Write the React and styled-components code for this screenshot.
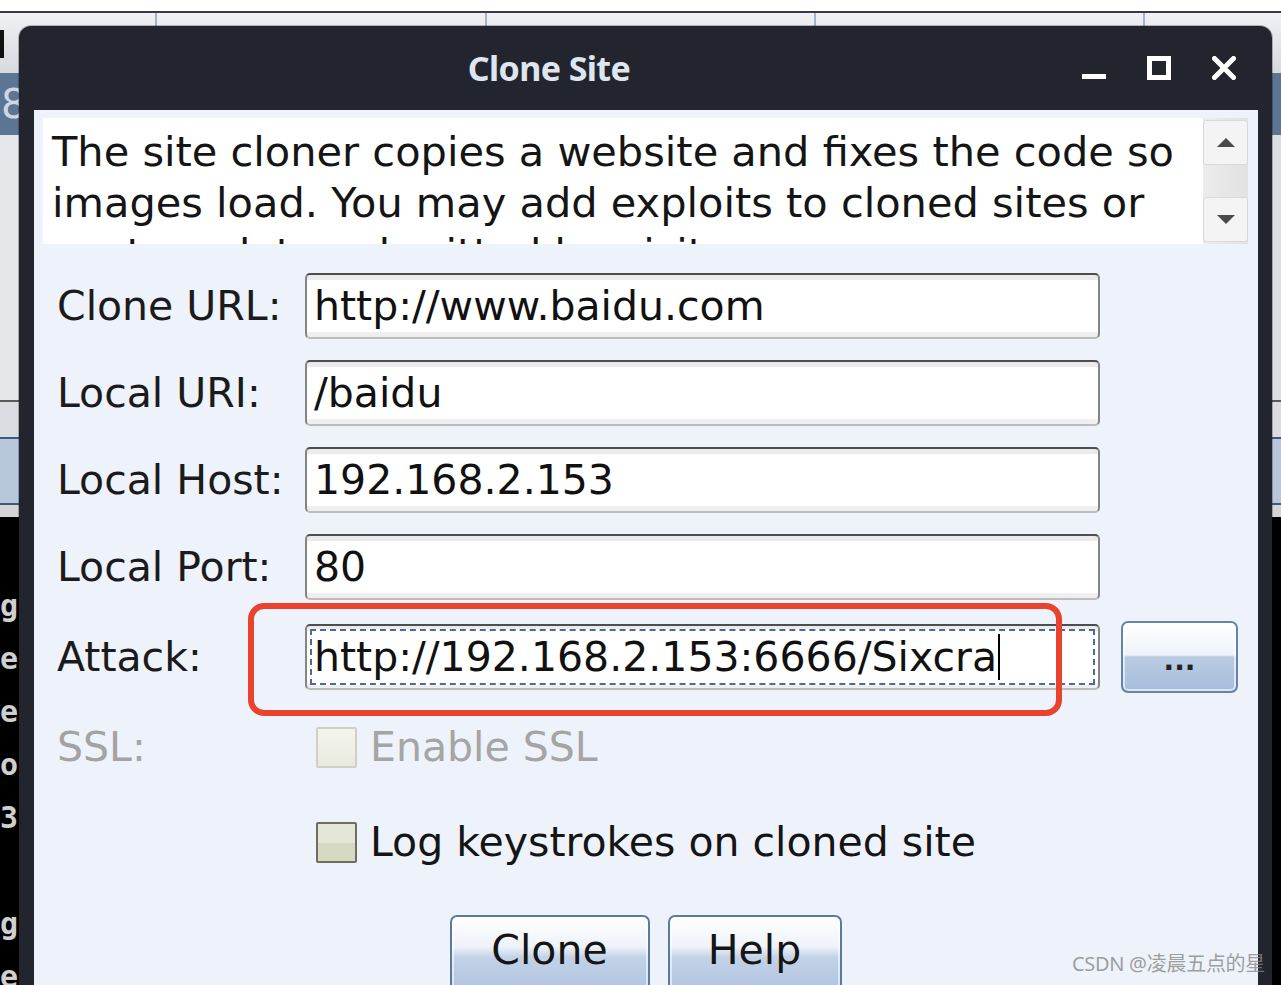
import React from 'react';
import styled, { createGlobalStyle } from 'styled-components';

const Global = createGlobalStyle`
  html, body { margin: 0; padding: 0; }
  body {
    width: 1281px; height: 985px; overflow: hidden; background: #fff;
    font-family: "DejaVu Sans", "Liberation Sans", sans-serif;
  }
`;

const Screen = styled.div`
  position: relative;
  width: 1281px;
  height: 985px;
  overflow: hidden;
`;

/* ---------- background application ---------- */
const Backdrop = styled.div`
  display: flex;
  flex-direction: column;
  height: 100%;
`;
const WhiteBand = styled.div`
  flex: none;
  height: 11px;
  background: #fff;
  border-bottom: 2px solid #3a3a3a;
`;
const HeaderBar = styled.div`
  flex: none;
  height: 60px;
  display: flex;
  background: linear-gradient(#eff1f4, #d6d9de);
`;
const HeaderCell = styled.div`
  flex: none;
  width: ${p => p.$w}px;
  border-right: 2px solid #a3b3c8;
  display: flex;
  align-items: flex-start;
`;
const CursorBar = styled.div`
  width: 4px;
  height: 28px;
  margin-top: 17px;
  background: #111;
`;
const SelectedRow = styled.div`
  flex: none;
  height: 62px;
  background: #5c7593;
  color: #cdd6e2;
  font-size: 40px;
  line-height: 62px;
  padding-left: 1px;
  overflow: hidden;
`;
const GrayArea = styled.div`
  flex: none;
  height: 265px;
  background: linear-gradient(90deg, #e4e6ea, #dadde2);
  border-bottom: 2px solid #5a5a5a;
`;
const GrayRow = styled.div`
  flex: none;
  height: 35px;
  background: #dadce1;
`;
const BlueRow = styled.div`
  flex: none;
  height: 64px;
  background: #b8c8da;
  border-top: 2px solid #3f5a80;
  border-bottom: 2px solid #3f5a80;
`;
const GapRow = styled.div`
  flex: none;
  height: 12px;
  background: #d5d5d5;
`;
const Terminal = styled.div`
  flex: 1;
  background: #000;
  padding-top: 62px;
`;
const TermColumn = styled.div`
  width: 19px;
  overflow: hidden;
  font-family: "DejaVu Sans Mono", monospace;
  font-weight: bold;
  font-size: 30px;
  line-height: 53px;
  color: #cfcfcf;
`;
const TermLine = styled.div`
  height: 53px;
  white-space: nowrap;
`;

/* ---------- dialog window ---------- */
const Window = styled.div`
  position: absolute;
  left: 19px;
  top: 26px;
  width: 1253px;
  height: 975px;
  display: flex;
  flex-direction: column;
  background: #22252d;
  border-radius: 12px 12px 0 0;
  box-shadow: 0 0 0 1px rgba(0, 0, 0, 0.25);
`;
const TitleBar = styled.div`
  flex: none;
  height: 84px;
  display: flex;
  align-items: center;
`;
const Title = styled.div`
  flex: 1;
  text-align: center;
  padding-left: 18px;
  color: #dfe5ef;
  font-family: "Noto Sans", sans-serif;
  font-weight: 700;
  font-size: 34px;
  letter-spacing: -0.6px;
`;
const WinButtons = styled.div`
  flex: none;
  display: flex;
  padding-right: 16px;
`;
const WinButton = styled.div`
  width: 65px;
  height: 84px;
  display: flex;
  align-items: center;
  justify-content: center;
`;

const Body = styled.div`
  flex: 1;
  margin: 0 14px 0 15px;
  background: #eef2fa;
  display: flex;
  flex-direction: column;
  padding: 8px 10px 0 9px;
`;

const DescBox = styled.div`
  flex: none;
  height: 126px;
  display: flex;
  background: #fff;
`;
const DescText = styled.div`
  flex: 1;
  padding: 8px 8px 0 9px;
  overflow: hidden;
  font-size: 41.5px;
  line-height: 51px;
  color: #151515;
`;
const ScrollBar = styled.div`
  flex: none;
  width: 45px;
  padding: 2px 0;
  display: flex;
  flex-direction: column;
  justify-content: space-between;
  background: linear-gradient(90deg, #ececec, #e2e2e2);
`;
const ScrollButton = styled.div`
  height: 45px;
  box-sizing: border-box;
  border: 1px solid #d9d9d9;
  border-radius: 3px;
  background: #f4f4f4;
  display: flex;
  align-items: center;
  justify-content: center;
`;
const Arrow = styled.div`
  width: 0;
  height: 0;
  border-left: 9px solid transparent;
  border-right: 9px solid transparent;
  ${p => (p.$down ? 'border-top: 9px solid #4a4a4a;' : 'border-bottom: 9px solid #4a4a4a;')}
`;

const Form = styled.div`
  display: grid;
  grid-template-columns: 227px 795px 117px;
  grid-template-rows: 66px 66px 66px 66px 72px 66px 82px;
  column-gap: 21px;
  row-gap: 21px;
  padding: 29px 0 0 14px;
  align-items: center;
`;
const Label = styled.div`
  grid-column: 1;
  font-size: 41px;
  color: ${p => (p.$disabled ? '#a3a3a3' : '#1b1b1b')};
  white-space: nowrap;
`;
const Field = styled.div`
  grid-column: 2;
  height: 66px;
  box-sizing: border-box;
  border: 2px solid;
  border-color: #4e4e4e #858585 #bcbcbc #858585;
  border-radius: 5px;
  background: linear-gradient(#ebebeb 0 5px, #fff 5px calc(100% - 5px), #efefef calc(100% - 5px));
  display: flex;
  align-items: center;
  padding-left: ${p => (p.$focused ? 0 : 7)}px;
  font-size: 41px;
  color: #111;
  white-space: nowrap;
  overflow: hidden;
`;
const FocusRing = styled.div`
  flex: 1;
  align-self: stretch;
  margin: 3px;
  border: 2px dashed #4f6b92;
  display: flex;
  align-items: center;
  padding-left: 2px;
  background: #fff;
`;
const Caret = styled.span`
  display: inline-block;
  width: 2px;
  height: 46px;
  margin-left: 1px;
  background: #000;
`;
const EllipsisButton = styled.div`
  grid-column: 3;
  height: 72px;
  box-sizing: border-box;
  border: 2px solid #6683aa;
  border-radius: 7px;
  background: linear-gradient(#ffffff 0%, #eef2f8 47%, #b9cbe3 50%, #a7bddb 100%);
  box-shadow: inset 0 0 0 2px rgba(255, 255, 255, 0.6);
  display: flex;
  align-items: center;
  justify-content: center;
  padding-top: 6px;
  font-size: 28px;
  font-weight: bold;
  color: #222;
`;
const CheckCell = styled.div`
  grid-column: 2 / span 2;
  display: flex;
  align-items: center;
  padding-left: 11px;
`;
const CheckBox = styled.div`
  flex: none;
  width: 41px;
  height: 41px;
  box-sizing: border-box;
  border: 2px solid ${p => (p.$disabled ? '#d0d0c6' : '#6e6e60')};
  border-radius: 2px;
  background: ${p =>
    p.$disabled
      ? 'linear-gradient(#f3f4ec, #e9eadf)'
      : 'linear-gradient(#e4e7d5 0 50%, #d6dac3 50%)'};
`;
const CheckText = styled.span`
  margin-left: 13px;
  font-size: 41px;
  color: ${p => (p.$disabled ? '#a5a5a5' : '#151515')};
  white-space: nowrap;
`;

const ButtonRow = styled.div`
  display: flex;
  justify-content: center;
  gap: 18px;
  margin-top: 32px;
`;
const PushButton = styled.div`
  width: ${p => p.$w}px;
  height: 80px;
  box-sizing: border-box;
  border: 2px solid #5b7aa2;
  border-bottom: none;
  border-radius: 7px 7px 0 0;
  background: linear-gradient(#ffffff 0%, #eef3f9 38%, #c2d2e7 52%, #aec3de 100%);
  box-shadow: inset 0 0 0 2px rgba(255, 255, 255, 0.55);
  text-align: center;
  padding-top: 8px;
  font-size: 41px;
  line-height: 51px;
  color: #151515;
`;

const Annotation = styled.div`
  position: absolute;
  left: 248px;
  top: 603px;
  width: 814px;
  height: 113px;
  box-sizing: border-box;
  border: 6px solid #e9432e;
  border-radius: 16px;
  pointer-events: none;
`;
const Watermark = styled.div`
  position: absolute;
  right: 16px;
  bottom: 8px;
  font-family: "Noto Sans", "Noto Sans CJK SC", sans-serif;
  font-size: 20px;
  letter-spacing: -0.3px;
  color: rgba(135, 135, 135, 0.8);
  white-space: nowrap;
`;

const MinIcon = () => (
  <svg width="24" height="24" viewBox="0 0 24 24">
    <rect x="0" y="18" width="24" height="5" fill="#fff" />
  </svg>
);
const MaxIcon = () => (
  <svg width="24" height="24" viewBox="0 0 24 24">
    <rect x="2.5" y="2.5" width="19" height="19" fill="none" stroke="#fff" strokeWidth="5" />
  </svg>
);
const CloseIcon = () => (
  <svg width="24" height="24" viewBox="0 0 24 24">
    <path d="M2.5 2.5 L21.5 21.5 M21.5 2.5 L2.5 21.5" stroke="#fff" strokeWidth="5" strokeLinecap="square" />
  </svg>
);

const fields = [
  ['Clone URL:', 'http://www.baidu.com'],
  ['Local URI:', '/baidu'],
  ['Local Host:', '192.168.2.153'],
  ['Local Port:', '80'],
];

const termLines = ['g', 'e', 'e', 'o', '3.', '', 'g', 'e'];

export default function App() {
  return (
    <Screen>
      <Global />
      <Backdrop>
        <WhiteBand />
        <HeaderBar>
          <HeaderCell $w={155}><CursorBar /></HeaderCell>
          <HeaderCell $w={328} />
          <HeaderCell $w={327} />
          <HeaderCell $w={327} />
        </HeaderBar>
        <SelectedRow>8</SelectedRow>
        <GrayArea />
        <GrayRow />
        <BlueRow />
        <GapRow />
        <Terminal>
          <TermColumn>
            {termLines.map((t, i) => (
              <TermLine key={i}>{t}</TermLine>
            ))}
          </TermColumn>
        </Terminal>
      </Backdrop>

      <Window>
        <TitleBar>
          <Title>Clone Site</Title>
          <WinButtons>
            <WinButton><MinIcon /></WinButton>
            <WinButton><MaxIcon /></WinButton>
            <WinButton><CloseIcon /></WinButton>
          </WinButtons>
        </TitleBar>
        <Body>
          <DescBox>
            <DescText>
              The site cloner copies a website and fixes the code so images load. You may add exploits to cloned sites or capture data submitted by visitors
            </DescText>
            <ScrollBar>
              <ScrollButton><Arrow /></ScrollButton>
              <ScrollButton><Arrow $down /></ScrollButton>
            </ScrollBar>
          </DescBox>

          <Form>
            {fields.map(([label, value]) => (
              <React.Fragment key={label}>
                <Label>{label}</Label>
                <Field>{value}</Field>
                <div />
              </React.Fragment>
            ))}
            <Label>Attack:</Label>
            <Field $focused>
              <FocusRing>
                http://192.168.2.153:6666/Sixcra<Caret />
              </FocusRing>
            </Field>
            <EllipsisButton>...</EllipsisButton>

            <Label $disabled>SSL:</Label>
            <CheckCell>
              <CheckBox $disabled />
              <CheckText $disabled>Enable SSL</CheckText>
            </CheckCell>

            <div />
            <CheckCell>
              <CheckBox />
              <CheckText>Log keystrokes on cloned site</CheckText>
            </CheckCell>
          </Form>

          <ButtonRow>
            <PushButton $w={200}>Clone</PushButton>
            <PushButton $w={174}>Help</PushButton>
          </ButtonRow>
        </Body>
      </Window>

      <Annotation />
      <Watermark>CSDN @凌晨五点的星</Watermark>
    </Screen>
  );
}
